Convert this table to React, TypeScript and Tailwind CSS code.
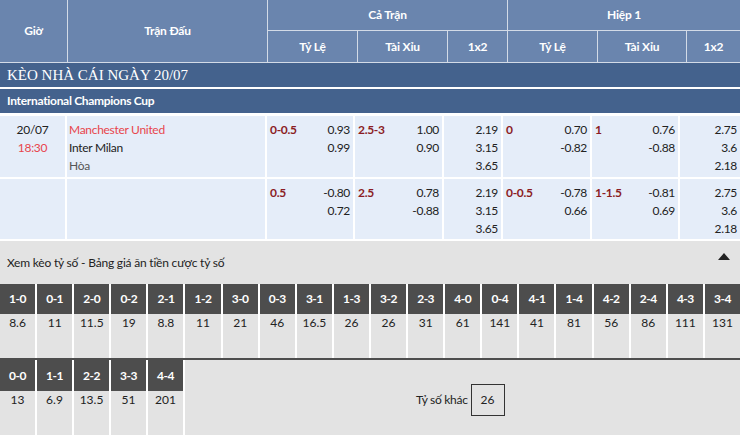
import React from 'react';

const font = { fontFamily: 'Lato, "Noto Sans", sans-serif' };

type Row = {
  date?: string;
  time?: string;
  teams?: string[];
  cells: { hdp: string; a: string; b: string }[];
  x12: string[];
  h1x12: string[];
};

const rows: Row[] = [
  {
    date: '20/07',
    time: '18:30',
    teams: ['Manchester United', 'Inter Milan', 'Hòa'],
    cells: [
      { hdp: '0-0.5', a: '0.93', b: '0.99' },
      { hdp: '2.5-3', a: '1.00', b: '0.90' },
      { hdp: '0', a: '0.70', b: '-0.82' },
      { hdp: '1', a: '0.76', b: '-0.88' },
    ],
    x12: ['2.19', '3.15', '3.65'],
    h1x12: ['2.75', '3.6', '2.18'],
  },
  {
    cells: [
      { hdp: '0.5', a: '-0.80', b: '0.72' },
      { hdp: '2.5', a: '0.78', b: '-0.88' },
      { hdp: '0-0.5', a: '-0.78', b: '0.66' },
      { hdp: '1-1.5', a: '-0.81', b: '0.69' },
    ],
    x12: ['2.19', '3.15', '3.65'],
    h1x12: ['2.75', '3.6', '2.18'],
  },
];

const scores1 = [
  ['1-0', '8.6'], ['0-1', '11'], ['2-0', '11.5'], ['0-2', '19'], ['2-1', '8.8'],
  ['1-2', '11'], ['3-0', '21'], ['0-3', '46'], ['3-1', '16.5'], ['1-3', '26'],
  ['3-2', '26'], ['2-3', '31'], ['4-0', '61'], ['0-4', '141'], ['4-1', '41'],
  ['1-4', '81'], ['4-2', '56'], ['2-4', '86'], ['4-3', '111'], ['3-4', '131'],
];
const scores2 = [['0-0', '13'], ['1-1', '6.9'], ['2-2', '13.5'], ['3-3', '51'], ['4-4', '201']];

const Odds: React.FC<{ hdp: string; a: string; b: string }> = ({ hdp, a, b }) => (
  <div className="bg-[#e5edf9] flex justify-between px-[3px] pt-[5px]">
    <span className="text-[#8b1c24] font-bold">{hdp}</span>
    <div className="text-right">
      <div>{a}</div>
      <div>{b}</div>
    </div>
  </div>
);

const Stack: React.FC<{ vals: string[] }> = ({ vals }) => (
  <div className="bg-[#e5edf9] text-right pr-[3px] pt-[5px]">
    {vals.map((v, i) => <div key={i}>{v}</div>)}
  </div>
);

const cols = 'grid grid-cols-[65px_198px_86px_87px_57px_87px_86px_1fr] gap-x-[2px]';

export default function App() {
  return (
    <div className="w-[740px] h-[435px] overflow-hidden bg-white text-[12px] text-[#222]" style={font}>
      {/* header */}
      <div className="grid grid-cols-[67px_199px_89px_89px_59px_89px_88px_1fr] grid-rows-[30px_31px] gap-[1px] bg-[#d3dbe7] text-white font-bold text-[12px] tracking-[-0.2px] border-b border-[#d3dbe7]">
        <div className="row-span-2 bg-[#6a85ae] flex items-center justify-center">Giờ</div>
        <div className="row-span-2 bg-[#6a85ae] flex items-center justify-center">Trận Đấu</div>
        <div className="col-span-3 bg-[#6a85ae] flex items-center justify-center">Cả Trận</div>
        <div className="col-span-3 bg-[#6a85ae] flex items-center justify-center">Hiệp 1</div>
        {['Tỷ Lệ', 'Tài Xỉu', '1x2', 'Tỷ Lệ', 'Tài Xỉu', '1x2'].map((t, i) => (
          <div key={i} className="bg-[#6a85ae] flex items-center justify-center">{t}</div>
        ))}
      </div>
      <div className="h-[24px] bg-[#44628d] text-white text-[15px] flex items-center pl-[7px]" style={{ fontFamily: '"Liberation Serif", serif' }}>
        KÈO NHÀ CÁI NGÀY 20/07
      </div>
      <div className="h-[2px] bg-white" />
      <div className="h-[24px] bg-[#44628d] text-white font-bold text-[12px] flex items-center pl-[7px] tracking-[-0.3px]">
        International Champions Cup
      </div>
      {/* data rows */}
      <div className="flex flex-col gap-y-[2px] pt-[3px] leading-[18px] tracking-[-0.3px]">
        {rows.map((r, i) => (
          <div key={i} className={`${cols} ${i === 0 ? 'h-[61px]' : 'h-[60px]'}`}>
            <div className="bg-[#e5edf9] text-center pt-[5px]">
              {r.date && <div>{r.date}</div>}
              {r.time && <div className="text-[#e8454c]">{r.time}</div>}
            </div>
            <div className="bg-[#e5edf9] pl-[2px] pt-[5px]">
              {r.teams && (
                <>
                  <div className="text-[#e8454c]">{r.teams[0]}</div>
                  <div>{r.teams[1]}</div>
                  <div className="text-[#555]">{r.teams[2]}</div>
                </>
              )}
            </div>
            <Odds {...r.cells[0]} />
            <Odds {...r.cells[1]} />
            <Stack vals={r.x12} />
            <Odds {...r.cells[2]} />
            <Odds {...r.cells[3]} />
            <Stack vals={r.h1x12} />
          </div>
        ))}
      </div>
      {/* score section */}
      <div className="mt-[2px] bg-[#e3e3e3] h-[200px]">
        <div className="h-[43px] flex items-center justify-between pl-[7px] pr-[10px]">
          <span className="text-[12px] text-[#222] tracking-[-0.2px]">Xem kèo tỷ số - Bảng giá ăn tiền cược tỷ số</span>
          <svg width="12" height="7" viewBox="0 0 12 7" className="-mt-[12px]"><path d="M6 0L12 7H0Z" fill="#222" /></svg>
        </div>
        <div className="grid grid-cols-20 gap-x-[2px] bg-white border-b-2 border-[#4d4d4d]">
          {scores1.map(([s, v]) => (
            <div key={s} className="flex flex-col h-[74px]">
              <div className="h-[30px] bg-[#4d4d4d] text-white font-bold flex items-center justify-center tracking-[-0.5px]">{s}</div>
              <div className="flex-1 bg-[#e3e3e3] text-center leading-[18px]">{v}</div>
            </div>
          ))}
        </div>
        <div className="flex">
          <div className="grid grid-cols-5 gap-x-[2px] w-[183px] bg-white">
            {scores2.map(([s, v]) => (
              <div key={s} className="flex flex-col h-[80px] bg-[#e3e3e3]">
                <div className="h-[31px] bg-[#4d4d4d] text-white font-bold flex items-center justify-center tracking-[-0.5px]">{s}</div>
                <div className="text-center leading-[18px]">{v}</div>
              </div>
            ))}
          </div>
          <div className="flex-1 flex items-start pt-[24px] pl-[231px] border-l-2 border-white">
            <span className="tracking-[-0.3px] mt-[7px] mr-[3px]">Tỷ số khác</span>
            <div className="w-[34px] h-[32px] border border-[#333] flex items-center justify-center">26</div>
          </div>
        </div>
      </div>
    </div>
  );
}
